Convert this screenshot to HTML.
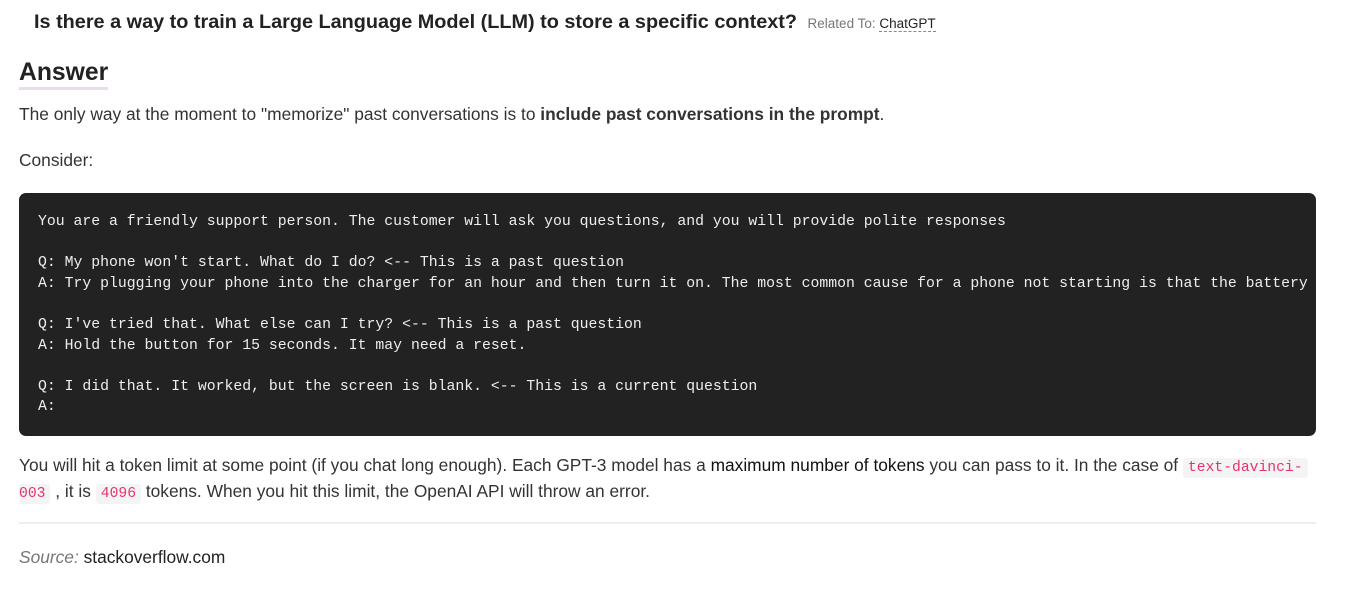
<!DOCTYPE html>
<html><head><style>
body{margin:0;background:#fff;font-family:"Liberation Sans",Arial,sans-serif;color:#222;width:1348px;height:596px;overflow:hidden;position:relative}
.a{position:absolute;white-space:nowrap}
h1{position:absolute;left:34px;top:11px;margin:0;font-size:19.85px;font-weight:bold;color:#222;white-space:nowrap}
h1 small{font-size:13.5px;font-weight:normal;color:#777;margin-left:5px}
h1 small span{color:#222;border-bottom:1px dashed #888}
.ans{left:19px;top:58px;font-size:24.7px;font-weight:bold;border-bottom:3px solid #eadcec;line-height:29px}
p{margin:0;font-size:17.35px;color:#333}
pre{position:absolute;left:19px;top:193px;width:1297px;height:243px;margin:0;background:#222;border-radius:7px;color:#eee;font-family:"Liberation Mono",monospace;font-size:14.8px;line-height:20.6px;padding:19px 0 0 19px;box-sizing:border-box;overflow:hidden}
pre div{width:1270px;overflow:hidden}
code{font-family:"Liberation Mono",monospace;font-size:14.7px;color:#e8336e;background:#f4f4f4;padding:2px 5px;border-radius:3px}
hr{position:absolute;left:19px;top:522px;width:1297px;margin:0;border:0;border-top:2px solid #eee}
</style></head><body>
<h1>Is there a way to train a Large Language Model (LLM) to store a specific context? <small>Related To: <span>ChatGPT</span></small></h1>
<div class="a ans">Answer</div>
<p class="a" style="left:19px;top:104px">The only way at the moment to "memorize" past conversations is to <b>include past conversations in the prompt</b>.</p>
<p class="a" style="left:19px;top:150px">Consider:</p>
<pre><div>You are a friendly support person. The customer will ask you questions, and you will provide polite responses

Q: My phone won't start. What do I do? &lt;-- This is a past question
A: Try plugging your phone into the charger for an hour and then turn it on. The most common cause for a phone not starting is that the battery is dead.

Q: I've tried that. What else can I try? &lt;-- This is a past question
A: Hold the button for 15 seconds. It may need a reset.

Q: I did that. It worked, but the screen is blank. &lt;-- This is a current question
A:</div></pre>
<p class="a" style="left:19px;top:455px">You will hit a token limit at some point (if you chat long enough). Each GPT-3 model has a <span style="color:#111">maximum number of tokens</span> you can pass to it. In the case of <code>text-davinci-</code></p>
<p class="a" style="left:19px;top:481px"><code style="padding-left:0">003</code> , it is <code>4096</code> tokens. When you hit this limit, the OpenAI API will throw an error.</p>
<hr>
<p class="a" style="left:19px;top:547px"><i style="color:#777">Source:</i> <span style="color:#222">stackoverflow.com</span></p>
</body></html>
